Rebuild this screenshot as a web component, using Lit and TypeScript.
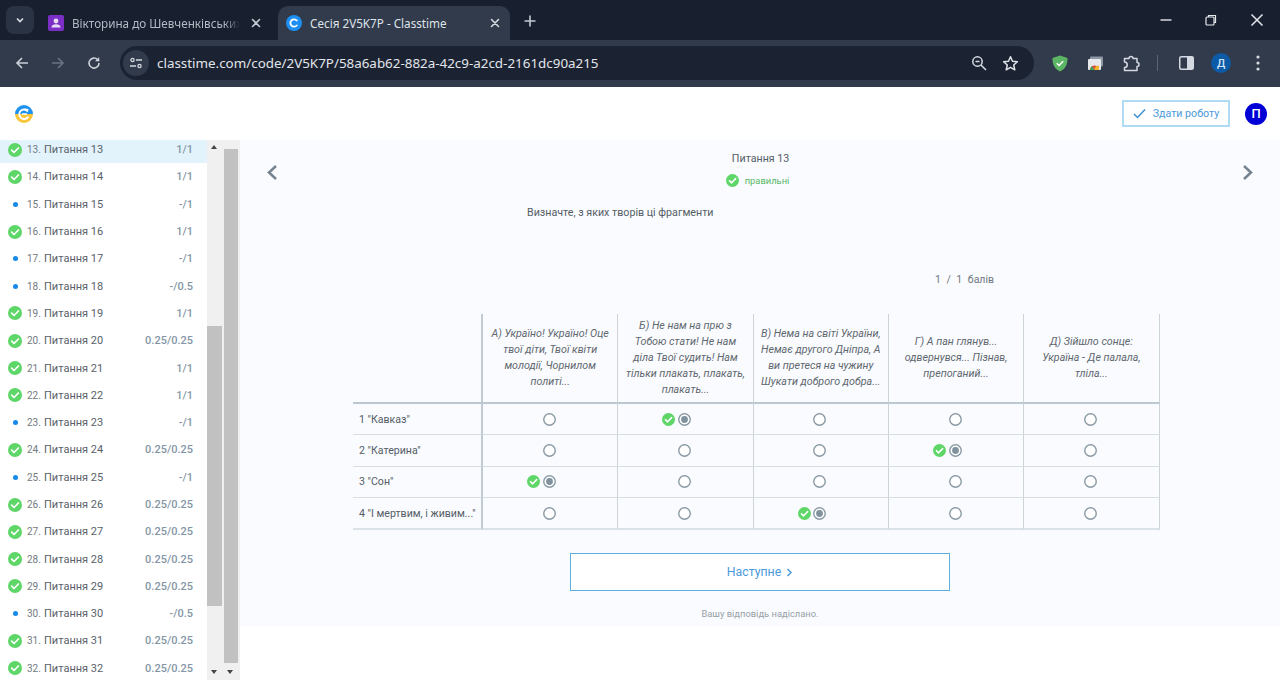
import { LitElement, html, css, svg } from 'lit';
import { customElement } from 'lit/decorators.js';

const checkBadge = (size: number) => html`
  <svg width=${size} height=${size} viewBox="0 0 14 14" style="display:block">
    <circle cx="7" cy="7" r="7" fill="#5fd668"></circle>
    <path d="M3.7 7.2 6 9.5 10.4 5" fill="none" stroke="#fff" stroke-width="1.7" stroke-linecap="round" stroke-linejoin="round"></path>
  </svg>
`;

/** Dark browser frame: tab strip and toolbar */
@customElement('browser-frame')
export class BrowserFrame extends LitElement {
  static styles = css`
    :host {
      display: block;
      height: 87px;
      background: #323b4b;
      font-family: 'Noto Sans', sans-serif;
      color: #d5dae2;
    }

    svg { display: block; flex: none; }

    .strip {
      height: 40px;
      display: flex;
      align-items: flex-end;
      background: #18202f;
    }

    .tab-menu {
      width: 28px;
      height: 28px;
      margin: 0 0 6px 6px;
      border-radius: 8px;
      background: #2a3343;
      display: flex;
      align-items: center;
      justify-content: center;
    }

    .tab {
      height: 34px;
      display: flex;
      align-items: center;
      box-sizing: border-box;
      font-size: 11.7px;
      white-space: nowrap;
    }

    .tab.first {
      width: 230px;
      margin-left: 14px;
      color: #b4bac5;
    }

    .tab.active {
      width: 232px;
      padding-left: 8px;
      border-radius: 10px 10px 0 0;
      background: #323b4b;
      color: #dfe3ea;
    }

    .tab .title {
      margin-left: 8px;
      overflow: hidden;
    }

    .tab.first .title {
      width: 172px;
      -webkit-mask-image: linear-gradient(90deg, #000 152px, transparent 168px);
      mask-image: linear-gradient(90deg, #000 152px, transparent 168px);
    }

    .tab.active .title { width: 173px; }

    .tab .close { margin-left: 6px; }

    .plus { margin: 0 0 12px 13px; }

    .window {
      margin-left: auto;
      align-self: stretch;
      display: flex;
      align-items: center;
      gap: 33px;
      padding: 0 16px 0 0;
    }

    .toolbar {
      height: 47px;
      box-sizing: border-box;
      padding: 6px 0 7px 15px;
      display: flex;
      align-items: center;
    }

    .nav {
      display: flex;
      gap: 22px;
      width: 105px;
    }

    .url {
      width: 914px;
      height: 34px;
      border-radius: 17px;
      background: #1b2333;
      display: flex;
      align-items: center;
      font-size: 13.4px;
      color: #e2e5ea;
    }

    .site {
      width: 26px;
      height: 26px;
      margin-left: 3px;
      border-radius: 50%;
      background: #323b4b;
      display: flex;
      align-items: center;
      justify-content: center;
      flex: none;
    }

    .url .text {
      margin-left: 8px;
      flex: 1;
      white-space: nowrap;
    }

    .url .end {
      display: flex;
      align-items: center;
      gap: 15px;
      padding-right: 15px;
    }

    .tools {
      display: flex;
      align-items: center;
      margin-left: 18px;
    }

    .sep {
      width: 1px;
      height: 16px;
      margin: 0 21px 0 17px;
      background: #5a6474;
    }

    .profile {
      width: 20px;
      height: 20px;
      margin-left: 17px;
      border-radius: 50%;
      background: #0d5aa7;
      color: #cfe2f7;
      font: 500 11px Roboto, sans-serif;
      display: flex;
      align-items: center;
      justify-content: center;
    }
  `;

  private close(color: string) {
    return html`<svg class="close" width="12" height="12" viewBox="0 0 12 12">
      <path d="M2.5 2.5l7 7M9.5 2.5l-7 7" stroke=${color} stroke-width="1.6" stroke-linecap="round"></path>
    </svg>`;
  }

  render() {
    return html`
      <div class="strip">
        <div class="tab-menu">
          <svg width="10" height="10" viewBox="0 0 10 10"><path d="M2 3.5 5 6.5 8 3.5" fill="none" stroke="#d5dae2" stroke-width="1.7"></path></svg>
        </div>
        <div class="tab first">
          <svg width="16" height="16" viewBox="0 0 16 16">
            <rect width="16" height="16" rx="2" fill="#7b2fc4"></rect>
            <circle cx="8" cy="6" r="2.4" fill="#e8dcf5"></circle>
            <path d="M3.5 12.5c0-2.2 2-3.2 4.5-3.2s4.5 1 4.5 3.2z" fill="#e8dcf5"></path>
          </svg>
          <span class="title">Вікторина до Шевченківських</span>
          ${this.close('#c5cad3')}
        </div>
        <div class="tab active">
          <svg width="16" height="16" viewBox="0 0 16 16">
            <circle cx="8" cy="8" r="8" fill="#1d8ff2"></circle>
            <path d="M10.8 5.5A3.7 3.7 0 1 0 10.8 10.5" fill="none" stroke="#fff" stroke-width="1.8" stroke-linecap="round"></path>
          </svg>
          <span class="title">Сесія 2V5K7P - Classtime</span>
          ${this.close('#d5dae2')}
        </div>
        <svg class="plus" width="14" height="14" viewBox="0 0 14 14"><path d="M7 1.5v11M1.5 7h11" stroke="#c5cad3" stroke-width="1.6"></path></svg>
        <div class="window">
          <svg width="12" height="12" viewBox="0 0 12 12"><path d="M0.5 6h11" stroke="#e5e7eb" stroke-width="1.4"></path></svg>
          <svg width="12" height="12" viewBox="0 0 12 12" fill="none" stroke="#e5e7eb" stroke-width="1.2"><rect x="1" y="3" width="8" height="8" rx="1"></rect><path d="M3.5 3V1.5h7v7H9"></path></svg>
          <svg width="14" height="14" viewBox="0 0 14 14"><path d="M1.5 1.5l11 11M12.5 1.5l-11 11" stroke="#e5e7eb" stroke-width="1.5"></path></svg>
        </div>
      </div>
      <div class="toolbar">
        <div class="nav">
          <svg width="14" height="14" viewBox="0 0 14 14" fill="none" stroke="#ccd1d9" stroke-width="1.6"><path d="M13 7H2M7 2 2 7l5 5"></path></svg>
          <svg width="14" height="14" viewBox="0 0 14 14" fill="none" stroke="#6a7382" stroke-width="1.6"><path d="M1 7h11M7 2l5 5-5 5"></path></svg>
          <svg width="14" height="14" viewBox="0 0 14 14" fill="none" stroke="#ccd1d9" stroke-width="1.6"><path d="M12 7a5 5 0 1 1-1.5-3.5L12 5"></path><path d="M12.2 1v4.2H8" fill="#ccd1d9" stroke="none"></path></svg>
        </div>
        <div class="url">
          <div class="site">
            <svg width="14" height="14" viewBox="0 0 14 14" fill="none" stroke="#d5dae2" stroke-width="1.3">
              <circle cx="3.5" cy="4" r="1.6"></circle><path d="M7 4h6M1 10h6"></path><circle cx="10.5" cy="10" r="1.6"></circle>
            </svg>
          </div>
          <span class="text">classtime.com/code/2V5K7P/58a6ab62-882a-42c9-a2cd-2161dc90a215</span>
          <div class="end">
            <svg width="16" height="16" viewBox="0 0 16 16" fill="none" stroke="#d5dae2" stroke-width="1.5"><circle cx="6.5" cy="6.5" r="4.7"></circle><path d="M10 10l5 5M4.5 6.5h4"></path></svg>
            <svg width="17" height="17" viewBox="0 0 17 17" fill="none" stroke="#e0e3e8" stroke-width="1.5" stroke-linejoin="round"><path d="M8.5 1.8l2 4.5 4.9.5-3.7 3.2 1.1 4.8-4.3-2.5-4.3 2.5 1.1-4.8L1.6 6.8l4.9-.5z"></path></svg>
          </div>
        </div>
        <div class="tools">
          <svg width="16" height="17" viewBox="0 0 16 17"><path d="M8 .5 15.5 3c0 6-1.5 10.5-7.5 13.5C2 13.5.5 9 .5 3z" fill="#5cb565"></path><path d="M4.8 8.3 7 10.5l4.2-4.2" fill="none" stroke="#fff" stroke-width="1.5"></path></svg>
          <svg style="margin-left:20px" width="15" height="14" viewBox="0 0 15 14">
            <rect x="2" y=".5" width="13" height="10" rx="1" fill="#8e97a5"></rect>
            <rect x="0" y="3" width="13" height="11" rx="1" fill="#e7e9ec"></rect>
            <path d="M2 14a4.5 4.5 0 0 1 9 0z" fill="#d9503f"></path>
            <path d="M6.5 14a4.5 4.5 0 0 1 4.5-4.5V14z" fill="#f1b82d"></path>
            <path d="M2 14a4.5 4.5 0 0 1 2-3.7L6.5 14z" fill="#3fa45b"></path>
          </svg>
          <svg style="margin-left:20px" width="17" height="17" viewBox="0 0 17 17" fill="none" stroke="#d5dae2" stroke-width="1.5" stroke-linejoin="round"><path d="M1.5 3.5H6a2 2 0 0 1 4 0h4v4a2 2 0 0 1 0 4v4H1.5v-3a2 2 0 0 0 0-5.5z"></path></svg>
          <div class="sep"></div>
          <svg width="15" height="14" viewBox="0 0 15 14"><rect x=".75" y=".75" width="13.5" height="12.5" rx="1.5" fill="none" stroke="#d5dae2" stroke-width="1.5"></rect><rect x="8" y="1" width="6" height="12" fill="#d5dae2"></rect></svg>
          <div class="profile">Д</div>
          <svg style="margin-left:25px" width="4" height="16" viewBox="0 0 4 16" fill="#d5dae2"><circle cx="2" cy="2" r="1.6"></circle><circle cx="2" cy="8" r="1.6"></circle><circle cx="2" cy="14" r="1.6"></circle></svg>
        </div>
      </div>
    `;
  }
}

/** Page header with logo, submit button and user avatar */
@customElement('page-header')
export class PageHeader extends LitElement {
  static styles = css`
    :host {
      display: flex;
      align-items: center;
      height: 53px;
      padding: 0 13px 0 15px;
      background: #fff;
      font-family: Roboto, sans-serif;
    }

    .submit {
      margin-left: auto;
      width: 108px;
      height: 27px;
      box-sizing: border-box;
      border: 2px solid #b0dcf3;
      background: #fff;
      display: flex;
      align-items: center;
      justify-content: center;
      gap: 7px;
      font: 10.7px Roboto, sans-serif;
      color: #4c9ada;
      padding: 0;
    }

    .avatar {
      width: 22px;
      height: 22px;
      margin-left: 15px;
      border-radius: 50%;
      background: #0000d6;
      color: #fff;
      font-size: 13px;
      font-weight: 500;
      display: flex;
      align-items: center;
      justify-content: center;
    }
  `;

  render() {
    return html`
      <svg width="18" height="18" viewBox="0 0 18 18">
        <path d="M0 9a9 9 0 0 1 18 0z" fill="#1e92f0"></path>
        <path d="M0 9a9 9 0 0 0 18 0z" fill="#f8c53a"></path>
        <path d="M12.8 6.2A4.8 4.8 0 1 0 13.3 11.5" fill="none" stroke="#fff" stroke-width="2"></path>
        <path d="M9.5 3.5l4 .5-1 3.5z" fill="#fff"></path>
        <path d="M7 9h5" stroke="#fff" stroke-width="1.5"></path>
      </svg>
      <button class="submit">
        <svg width="13" height="11" viewBox="0 0 13 11"><path d="M1 6l3.5 3.5L12 1.5" fill="none" stroke="#3b8fd0" stroke-width="1.5"></path></svg>
        Здати роботу
      </button>
      <div class="avatar">П</div>
    `;
  }
}

type Question = { n: number; score: string; done: boolean };

const QUESTIONS: Question[] = [
  { n: 13, score: '1/1', done: true },
  { n: 14, score: '1/1', done: true },
  { n: 15, score: '-/1', done: false },
  { n: 16, score: '1/1', done: true },
  { n: 17, score: '-/1', done: false },
  { n: 18, score: '-/0.5', done: false },
  { n: 19, score: '1/1', done: true },
  { n: 20, score: '0.25/0.25', done: true },
  { n: 21, score: '1/1', done: true },
  { n: 22, score: '1/1', done: true },
  { n: 23, score: '-/1', done: false },
  { n: 24, score: '0.25/0.25', done: true },
  { n: 25, score: '-/1', done: false },
  { n: 26, score: '0.25/0.25', done: true },
  { n: 27, score: '0.25/0.25', done: true },
  { n: 28, score: '0.25/0.25', done: true },
  { n: 29, score: '0.25/0.25', done: true },
  { n: 30, score: '-/0.5', done: false },
  { n: 31, score: '0.25/0.25', done: true },
  { n: 32, score: '0.25/0.25', done: true },
];

/** Question list with its own scrollbar, next to the page scrollbar */
@customElement('question-sidebar')
export class QuestionSidebar extends LitElement {
  static styles = css`
    :host {
      display: flex;
      width: 240px;
      height: 540px;
      flex: none;
      overflow: hidden;
      background: #fff;
      font-family: Roboto, sans-serif;
    }

    .list {
      width: 207px;
      flex: none;
      margin-top: -4px;
    }

    .row {
      height: 27.3px;
      display: flex;
      align-items: center;
      padding: 0 14px 0 8px;
      box-sizing: border-box;
      color: #59616a;
      font-size: 11px;
    }

    .row.current { background: #e3f3fc; }

    .mark {
      width: 14px;
      display: flex;
      justify-content: center;
      flex: none;
    }

    .dot {
      width: 5px;
      height: 5px;
      border-radius: 50%;
      background: #1689ea;
    }

    .num {
      margin-left: 5px;
      width: 17px;
      font-size: 10px;
      color: #727a82;
    }

    .score {
      margin-left: auto;
      color: #8496a6;
      font-weight: 500;
    }

    .bar {
      width: 15px;
      flex: none;
      display: flex;
      flex-direction: column;
      background: #f0f0f0;
      position: relative;
    }

    .page-bar {
      width: 14px;
      padding: 0 2px;
    }

    .gap { flex: none; }

    .thumb {
      background: #c1c1c1;
      flex: none;
    }

    .arrow {
      position: absolute;
      left: 4px;
      width: 0;
      height: 0;
      border-left: 3.5px solid transparent;
      border-right: 3.5px solid transparent;
    }

    .page-bar .arrow { left: 5px; }
    .arrow.up { top: 5px; border-bottom: 4px solid #444; }
    .arrow.down { bottom: 6px; border-top: 4px solid #444; }
  `;

  render() {
    return html`
      <div class="list">
        ${QUESTIONS.map((q, i) => html`
          <div class="row ${i === 0 ? 'current' : ''}">
            <span class="mark">${q.done ? checkBadge(14) : html`<span class="dot"></span>`}</span>
            <span class="num">${q.n}.</span>
            <span>Питання ${q.n}</span>
            <span class="score">${q.score}</span>
          </div>
        `)}
      </div>
      <div class="bar">
        <div class="arrow up"></div>
        <div class="gap" style="height:186px"></div>
        <div class="thumb" style="height:280px"></div>
        <div class="arrow down"></div>
      </div>
      <div class="bar page-bar">
        <div class="gap" style="height:9px"></div>
        <div class="thumb" style="height:514px"></div>
        <div class="arrow down"></div>
      </div>
    `;
  }
}

const HEADERS = [
  'А) Україно! Україно! Оце твої діти, Твої квіти молодії, Чорнилом политі...',
  'Б) Не нам на прю з Тобою стати! Не нам діла Твої судить! Нам тільки плакать, плакать, плакать...',
  'В) Нема на світі України, Немає другого Дніпра, А ви претеся на чужину Шукати доброго добра...',
  'Г) А пан глянув... одвернувся... Пізнав, препоганий...',
  'Д) Зійшло сонце:\nУкраїна - Де палала, тліла...',
];

const ROWS = [
  { label: '1 "Кавказ"', answer: 1 },
  { label: '2 "Катерина"', answer: 3 },
  { label: '3 "Сон"', answer: 0 },
  { label: '4 "І мертвим, і живим..."', answer: 2 },
];

/** Matching table and navigation for the open question */
@customElement('question-panel')
export class QuestionPanel extends LitElement {
  static styles = css`
    :host {
      display: block;
      flex: 1;
      height: 486px;
      background: #f9fbfe;
      font-family: Roboto, sans-serif;
      color: #555d66;
    }

    .top {
      display: grid;
      grid-template-columns: 1fr auto 1fr;
      padding: 12px 26px 0;
      height: 51px;
      box-sizing: border-box;
    }

    .chev { margin-top: 12px; }
    .chev.right { justify-self: end; }

    .heading {
      display: flex;
      flex-direction: column;
      align-items: flex-end;
      padding-right: 5px;
      font-size: 10.7px;
      line-height: 13px;
    }

    .status {
      display: flex;
      align-items: center;
      gap: 6px;
      margin-top: 9px;
      font-size: 9.4px;
      color: #58b868;
    }

    .prompt {
      margin: 15px 0 0 287px;
      font-size: 10.7px;
      line-height: 14px;
    }

    .points {
      margin: 53px 286px 0 0;
      text-align: right;
      font-size: 10.5px;
      word-spacing: 3px;
      line-height: 14px;
      color: #6f7880;
    }

    table {
      margin: 27px 0 0 113px;
      width: 806.5px;
      table-layout: fixed;
      border-collapse: separate;
      border-spacing: 0;
      font-size: 10.6px;
    }

    th {
      height: 88px;
      box-sizing: content-box;
      padding: 0 7px;
      font-weight: 400;
      font-size: 10.7px;
      font-style: italic;
      line-height: 16px;
      text-align: center;
      vertical-align: middle;
      white-space: pre-line;
      color: #5f676f;
      border-bottom: 2px solid #bcc7cf;
      border-right: 1px solid #ccd4da;
    }

    th:first-child, td:first-child {
      border-right: 2px solid #c0cad2;
    }

    td {
      height: 30.3px;
      padding: 0;
      border-bottom: 1px solid #d6dde3;
      border-right: 1px solid #ccd4da;
    }

    tr:last-child td { border-bottom: 2px solid #dce3e8; }

    td:first-child {
      padding-left: 6px;
      white-space: nowrap;
    }

    .cell {
      position: relative;
      display: flex;
      justify-content: center;
      padding-right: 2px;
    }

    .radio { display: block; }

    .ok {
      position: absolute;
      top: 0;
      left: 44px;
    }

    .next {
      display: flex;
      align-items: center;
      justify-content: center;
      gap: 5px;
      width: 380px;
      height: 38px;
      box-sizing: border-box;
      margin: 23px 0 0 330px;
      padding: 0;
      border: 1px solid #5fafdc;
      background: #fff;
      font: 12.3px Roboto, sans-serif;
      color: #4c9ada;
    }

    .note {
      margin-top: 17px;
      text-align: center;
      font-size: 9.4px;
      line-height: 12px;
      color: #97a0a8;
    }
  `;

  private chevron(d: string, cls: string) {
    return html`<svg class="chev ${cls}" width="12" height="17" viewBox="0 0 12 17">
      <path d=${d} fill="none" stroke="#74838f" stroke-width="2.5"></path>
    </svg>`;
  }

  private radio(on: boolean) {
    return html`<svg class="radio" width="13" height="13" viewBox="0 0 13 13">
      <circle cx="6.5" cy="6.5" r="5.75" fill="#fff" stroke="#8a9aa5" stroke-width="1.4"></circle>
      ${on ? svg`<circle cx="6.5" cy="6.5" r="3.4" fill="#7f929e"></circle>` : ''}
    </svg>`;
  }

  render() {
    return html`
      <div class="top">
        ${this.chevron('M10 2 3 8.5 10 15', '')}
        <div class="heading">
          <span>Питання 13</span>
          <span class="status">${checkBadge(13)}правильні</span>
        </div>
        ${this.chevron('M2 2l7 6.5L2 15', 'right')}
      </div>
      <div class="prompt">Визначте, з яких творів ці фрагменти</div>
      <div class="points">1 / 1 балів</div>
      <table>
        <colgroup>
          <col style="width:130px" /><col style="width:135.3px" /><col style="width:135.3px" />
          <col style="width:135.3px" /><col style="width:135.3px" /><col style="width:135.3px" />
        </colgroup>
        <tr>
          <th></th>
          ${HEADERS.map((h) => html`<th>${h}</th>`)}
        </tr>
        ${ROWS.map((r) => html`
          <tr>
            <td>${r.label}</td>
            ${HEADERS.map((_, i) => html`
              <td>
                <div class="cell">
                  ${r.answer === i ? html`<span class="ok">${checkBadge(13)}</span>` : ''}
                  ${this.radio(r.answer === i)}
                </div>
              </td>
            `)}
          </tr>
        `)}
      </table>
      <button class="next">
        Наступне
        <svg width="7" height="9" viewBox="0 0 7 9"><path d="M1.5 1 5 4.5 1.5 8" fill="none" stroke="#4c9ada" stroke-width="1.5"></path></svg>
      </button>
      <div class="note">Вашу відповідь надіслано.</div>
    `;
  }
}

@customElement('app-root')
export class AppRoot extends LitElement {
  static styles = css`
    :host {
      display: block;
      width: 1280px;
      height: 680px;
      overflow: hidden;
      background: #fff;
    }

    .body {
      display: flex;
      align-items: flex-start;
    }
  `;

  render() {
    return html`
      <browser-frame></browser-frame>
      <page-header></page-header>
      <div class="body">
        <question-sidebar></question-sidebar>
        <question-panel></question-panel>
      </div>
    `;
  }
}
